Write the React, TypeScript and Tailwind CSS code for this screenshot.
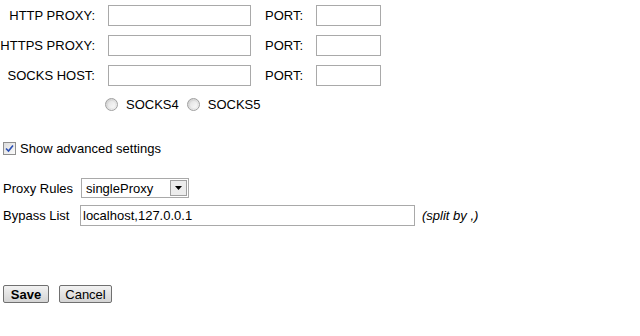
import { useState } from 'react';

const font = { fontFamily: '"Liberation Sans", Arial, sans-serif' };

function ProxyRow({ label }: { label: string }) {
  return (
    <div className="flex items-center h-[21px]">
      <span className="w-[96px] text-right pr-[1px]">{label}</span>
      <input className="ml-[12px] w-[143px] h-[21px] border border-[#a9a9a9] bg-white outline-none" />
      <span className="ml-[14px] w-[51px]">PORT:</span>
      <input className="w-[65px] h-[21px] border border-[#a9a9a9] bg-white outline-none" />
    </div>
  );
}

function Radio({ label }: { label: string }) {
  return (
    <label className="flex items-center">
      <span className="w-[13px] h-[13px] rounded-full border border-[#a0a0a0] bg-gradient-to-br from-[#cfcfcf] to-[#f4f4f4] flex items-center justify-center">
        <span className="w-[7px] h-[7px] rounded-full bg-gradient-to-br from-[#e2e2e2] to-[#fafafa]" />
      </span>
      <span className="ml-[8px]">{label}</span>
    </label>
  );
}

export default function App() {
  const [advanced] = useState(true);

  return (
    <div style={font} className="w-[640px] h-[336px] bg-white text-[13px] leading-[15px] text-black">
      <div className="pt-[5px] flex flex-col gap-[9px]">
        <ProxyRow label="HTTP PROXY:" />
        <ProxyRow label="HTTPS PROXY:" />
        <ProxyRow label="SOCKS HOST:" />
      </div>

      <div className="flex items-center gap-[8px] ml-[105px] mt-[11px] h-[14px]">
        <Radio label="SOCKS4" />
        <Radio label="SOCKS5" />
      </div>

      <div className="flex items-center mt-[30px] ml-[3px] h-[14px]">
        <span className="w-[13px] h-[13px] border border-[#8f8f8f] bg-gradient-to-br from-[#dcdcdc] to-[#fbfbfb] flex items-center justify-center">
          {advanced && (
            <svg width="9" height="9" viewBox="0 0 9 9">
              <path d="M1 4.5 L3.5 7 L8 1.5" stroke="#2a4fb5" strokeWidth="1.6" fill="none" />
            </svg>
          )}
        </span>
        <span className="ml-[4px]">Show advanced settings</span>
      </div>

      <div className="flex items-center mt-[23px] ml-[3px] h-[20px]">
        <span className="w-[78px]">Proxy Rules</span>
        <div className="w-[108px] h-[20px] border border-[#a9a9a9] bg-white flex items-center">
          <span className="flex-1 pl-[4px]">singleProxy</span>
          <span className="w-[17px] h-[16px] mr-[1px] border border-[#a0a0a0] bg-[#ececec] flex items-center justify-center">
            <svg width="7" height="4" viewBox="0 0 7 4">
              <path d="M0 0 H7 L3.5 4 Z" fill="#000" />
            </svg>
          </span>
        </div>
      </div>

      <div className="flex items-center mt-[7px] ml-[3px] h-[21px]">
        <span className="w-[77px]">Bypass List</span>
        <div className="w-[335px] h-[21px] border border-[#a9a9a9] bg-white flex items-center pl-[2px]">
          localhost,127.0.0.1
        </div>
        <span className="ml-[7px] italic">(split by ,)</span>
      </div>

      <div className="flex items-center gap-[10px] mt-[59px] ml-[3px]">
        <button className="w-[46px] h-[18px] border border-[#707070] rounded-[2px] bg-gradient-to-b from-[#f2f2f2] to-[#d4d4d4] font-bold leading-[15px]">
          Save
        </button>
        <button className="w-[53px] h-[18px] border border-[#707070] rounded-[2px] bg-gradient-to-b from-[#f2f2f2] to-[#d4d4d4] leading-[15px]">
          Cancel
        </button>
      </div>
    </div>
  );
}
